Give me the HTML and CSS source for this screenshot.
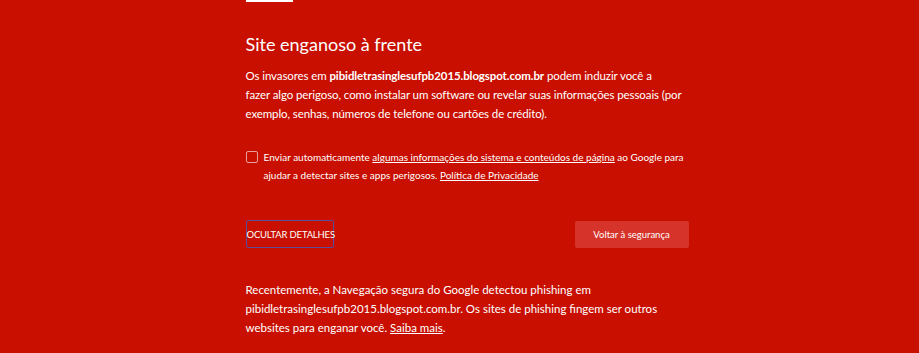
FILE: index.html
```html
<!DOCTYPE html>
<html lang="pt-BR">
  <head>
    <meta charset="UTF-8" />
    <meta name="viewport" content="width=device-width, initial-scale=1.0" />
    <title>Erro de privacidade</title>
    <link rel="stylesheet" href="styles.css">
  </head>
  <body>
    <div class="container">
      <div class="icon"></div>
      <h1>Site enganoso à frente</h1>
      <p class="intro">
        Os invasores em <strong>pibidletrasinglesufpb2015.blogspot.com.br</strong> podem induzir você a<br>
        fazer algo perigoso, como instalar um software ou revelar suas informações pessoais (por<br>
        exemplo, senhas, números de telefone ou cartões de crédito).
      </p>
      <label class="optin">
        <span class="box"></span>
        <span>Enviar automaticamente <a href="#">algumas informações do sistema e conteúdos de página</a> ao Google para<br>
          ajudar a detectar sites e apps perigosos. <a href="#">Política de Privacidade</a></span>
      </label>
      <div class="nav">
        <button class="details">OCULTAR DETALHES</button>
        <button class="primary">Voltar à segurança</button>
      </div>
      <p class="details-text">
        Recentemente, a Navegação segura do Google detectou phishing em<br>
        pibidletrasinglesufpb2015.blogspot.com.br. Os sites de phishing fingem ser outros<br>
        websites para enganar você. <a href="#">Saiba mais</a>.
      </p>
    </div>
  </body>
</html>
```

FILE: styles.css
```css
* {
  padding: 0;
  margin: 0;
  box-sizing: border-box;
}
body {
  background: #c80f00;
  color: #fff;
  font-family: Lato, "Open Sans", sans-serif;
  font-size: 11.5px;
}
.container {
  width: 460px;
  margin: 0 auto;
  padding-left: 16px;
}
.icon {
  width: 47px;
  height: 2px;
  background: #fff;
}
h1 {
  font-weight: 400;
  font-size: 18px;
  line-height: 24px;
  margin-top: 30px;
}
.intro,
.details-text {
  line-height: 19px;
  white-space: nowrap;
}
.intro {
  margin-top: 10px;
  letter-spacing: -0.1px;
}
a {
  color: #fff;
}
.optin {
  display: flex;
  gap: 6px;
  margin-top: 25px;
  font-size: 10px;
  line-height: 18px;
  white-space: nowrap;
}
.box {
  flex: none;
  width: 12px;
  height: 12px;
  margin-top: 3px;
  border: 1px solid rgba(255, 255, 255, 0.6);
  border-radius: 2px;
}
.nav {
  display: flex;
  justify-content: space-between;
  margin-top: 36px;
}
button {
  font-family: inherit;
  color: #fff;
  cursor: pointer;
}
.details {
  background: none;
  border: 1px solid #5a4d9a;
  border-radius: 2px;
  font-size: 9.5px;
  letter-spacing: -0.2px;
  width: 88px;
  height: 28px;
  padding: 0;
  white-space: nowrap;
}
.primary {
  background: #d6332a;
  border: none;
  border-radius: 2px;
  font-size: 9.5px;
  width: 114px;
  height: 27px;
  margin-top: 1px;
  margin-right: 1px;
}
.details-text {
  margin-top: 32px;
}
```
